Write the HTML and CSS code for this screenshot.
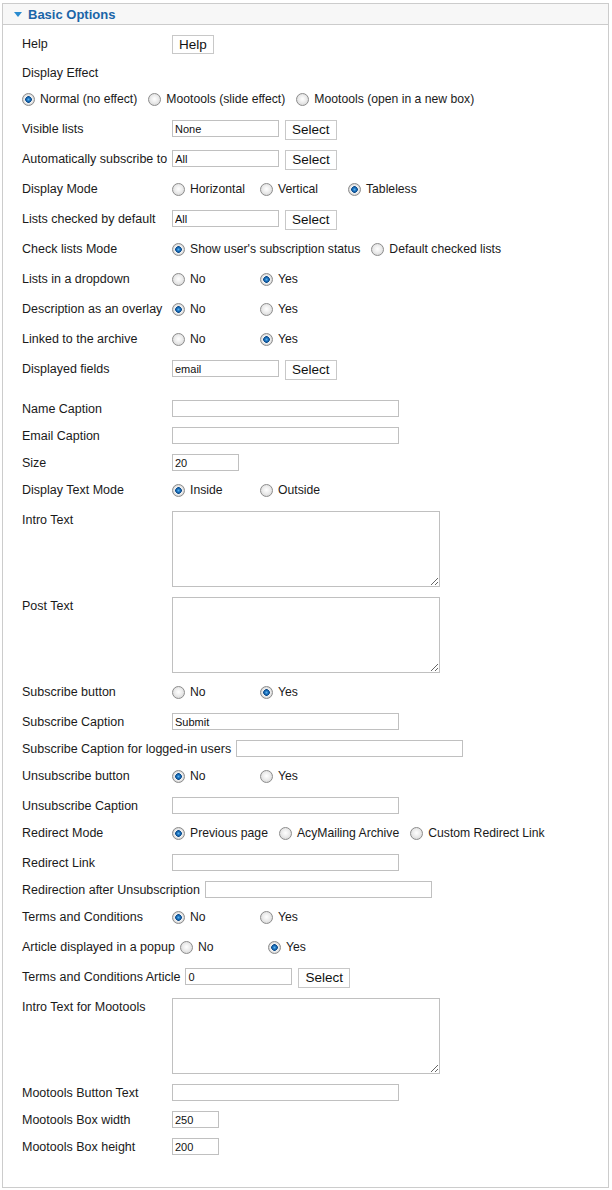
FILE: index.html
```html
<!DOCTYPE html>
<html lang="en">
<head>
<meta charset="utf-8">
<title>Basic Options</title>
<link rel="stylesheet" href="styles.css">
</head>
<body>
<div class="panel">
  <div class="panel-head">
    <span class="tri"></span>
    <span class="title">Basic Options</span>
  </div>
  <div class="panel-body">
    <div class="row"><span class="lbl">Help</span><button class="btn btn-help">Help</button></div>

    <div class="row row-lab"><span class="lbl">Display Effect</span></div>
    <div class="row">
      <div class="opts">
        <label class="opt"><input type="radio" class="rad" name="eff" checked>Normal (no effect)</label>
        <label class="opt"><input type="radio" class="rad" name="eff">Mootools (slide effect)</label>
        <label class="opt"><input type="radio" class="rad" name="eff">Mootools (open in a new box)</label>
      </div>
    </div>

    <div class="row"><span class="lbl">Visible lists</span><input class="txt w107" value="None"><button class="btn">Select</button></div>
    <div class="row"><span class="lbl">Automatically subscribe to</span><input class="txt w107" value="All"><button class="btn">Select</button></div>
    <div class="row"><span class="lbl">Display Mode</span>
      <div class="opts">
        <label class="opt"><input type="radio" class="rad" name="dm">Horizontal</label>
        <label class="opt"><input type="radio" class="rad" name="dm">Vertical</label>
        <label class="opt"><input type="radio" class="rad" name="dm" checked>Tableless</label>
      </div>
    </div>
    <div class="row"><span class="lbl">Lists checked by default</span><input class="txt w107" value="All"><button class="btn">Select</button></div>
    <div class="row"><span class="lbl">Check lists Mode</span>
      <div class="opts">
        <label class="opt"><input type="radio" class="rad" name="clm" checked>Show user's subscription status</label>
        <label class="opt"><input type="radio" class="rad" name="clm">Default checked lists</label>
      </div>
    </div>
    <div class="row"><span class="lbl">Lists in a dropdown</span>
      <div class="opts">
        <label class="opt"><input type="radio" class="rad" name="dd">No</label>
        <label class="opt"><input type="radio" class="rad" name="dd" checked>Yes</label>
      </div>
    </div>
    <div class="row"><span class="lbl">Description as an overlay</span>
      <div class="opts">
        <label class="opt"><input type="radio" class="rad" name="ov" checked>No</label>
        <label class="opt"><input type="radio" class="rad" name="ov">Yes</label>
      </div>
    </div>
    <div class="row"><span class="lbl">Linked to the archive</span>
      <div class="opts">
        <label class="opt"><input type="radio" class="rad" name="ar">No</label>
        <label class="opt"><input type="radio" class="rad" name="ar" checked>Yes</label>
      </div>
    </div>
    <div class="row"><span class="lbl">Displayed fields</span><input class="txt w107" value="email"><button class="btn">Select</button></div>

    <div class="spacer"></div>

    <div class="row"><span class="lbl">Name Caption</span><input class="txt w227" value=""></div>
    <div class="row"><span class="lbl">Email Caption</span><input class="txt w227" value=""></div>
    <div class="row"><span class="lbl">Size</span><input class="txt w67" value="20"></div>
    <div class="row"><span class="lbl">Display Text Mode</span>
      <div class="opts">
        <label class="opt"><input type="radio" class="rad" name="tm" checked>Inside</label>
        <label class="opt"><input type="radio" class="rad" name="tm">Outside</label>
      </div>
    </div>
    <div class="row"><span class="lbl">Intro Text</span><textarea class="area"></textarea></div>
    <div class="row"><span class="lbl">Post Text</span><textarea class="area"></textarea></div>
    <div class="row"><span class="lbl">Subscribe button</span>
      <div class="opts">
        <label class="opt"><input type="radio" class="rad" name="sb">No</label>
        <label class="opt"><input type="radio" class="rad" name="sb" checked>Yes</label>
      </div>
    </div>
    <div class="row"><span class="lbl">Subscribe Caption</span><input class="txt w227" value="Submit"></div>
    <div class="row"><span class="lbl">Subscribe Caption for logged-in users</span><input class="txt w227" value=""></div>
    <div class="row"><span class="lbl">Unsubscribe button</span>
      <div class="opts">
        <label class="opt"><input type="radio" class="rad" name="ub" checked>No</label>
        <label class="opt"><input type="radio" class="rad" name="ub">Yes</label>
      </div>
    </div>
    <div class="row"><span class="lbl">Unsubscribe Caption</span><input class="txt w227" value=""></div>
    <div class="row"><span class="lbl">Redirect Mode</span>
      <div class="opts">
        <label class="opt"><input type="radio" class="rad" name="rm" checked>Previous page</label>
        <label class="opt"><input type="radio" class="rad" name="rm">AcyMailing Archive</label>
        <label class="opt"><input type="radio" class="rad" name="rm">Custom Redirect Link</label>
      </div>
    </div>
    <div class="row"><span class="lbl">Redirect Link</span><input class="txt w227" value=""></div>
    <div class="row"><span class="lbl">Redirection after Unsubscription</span><input class="txt w227" value=""></div>
    <div class="row"><span class="lbl">Terms and Conditions</span>
      <div class="opts">
        <label class="opt"><input type="radio" class="rad" name="tc" checked>No</label>
        <label class="opt"><input type="radio" class="rad" name="tc">Yes</label>
      </div>
    </div>
    <div class="row"><span class="lbl">Article displayed in a popup</span>
      <div class="opts">
        <label class="opt"><input type="radio" class="rad" name="ap">No</label>
        <label class="opt"><input type="radio" class="rad" name="ap" checked>Yes</label>
      </div>
    </div>
    <div class="row"><span class="lbl">Terms and Conditions Article</span><input class="txt w107" value="0"><button class="btn">Select</button></div>
    <div class="row"><span class="lbl">Intro Text for Mootools</span><textarea class="area"></textarea></div>
    <div class="row"><span class="lbl">Mootools Button Text</span><input class="txt w227" value=""></div>
    <div class="row"><span class="lbl">Mootools Box width</span><input class="txt w47" value="250"></div>
    <div class="row"><span class="lbl">Mootools Box height</span><input class="txt w47" value="200"></div>
  </div>
</div>
</body>
</html>
```

FILE: styles.css
```css
html, body {
  margin: 0;
  padding: 0;
  background: #ffffff;
}

body {
  font-family: "Liberation Sans", Arial, sans-serif;
  font-size: 12px;
  color: #1a1a1a;
}

.panel {
  margin: 3px 0 0 2px;
  width: 605px;
  border: 1px solid #cccccc;
  background: #ffffff;
}

.panel-head {
  height: 20px;
  background: #f7f7f7;
  border-bottom: 1px solid #cccccc;
  display: flex;
  align-items: center;
  padding-left: 11px;
}

.tri {
  width: 0;
  height: 0;
  border-left: 4px solid transparent;
  border-right: 4px solid transparent;
  border-top: 5px solid #2a8bd0;
  margin-right: 6px;
  margin-top: 1px;
}

.title {
  font-size: 13px;
  font-weight: bold;
  color: #1a65a8;
}

.panel-body {
  padding: 5px 0 27px 19px;
}

.row {
  display: flex;
  align-items: flex-start;
  padding: 5px 0;
}

.row-lab {
  padding-bottom: 4px;
}

.spacer {
  height: 10px;
}

.lbl {
  min-width: 145px;
  margin-right: 5px;
  padding-top: 1px;
  line-height: 16px;
  white-space: nowrap;
  font-size: 12.5px;
}

.txt {
  box-sizing: border-box;
  height: 17px;
  margin: 0;
  padding: 0 2px;
  border: 1px solid #c0c0c0;
  font-family: "Liberation Sans", Arial, sans-serif;
  font-size: 11px;
  color: #111;
  background: #fff;
  outline: none;
}

.w47 { width: 47px; }
.w67 { width: 67px; }
.w107 { width: 107px; }
.w227 { width: 227px; }

.btn {
  box-sizing: border-box;
  height: 20px;
  margin: 0 0 0 6px;
  padding: 0 6px;
  border: 1px solid #c8c8c8;
  background: #ffffff;
  font-family: "Liberation Sans", Arial, sans-serif;
  font-size: 13.5px;
  line-height: 18px;
  color: #111;
}

.btn-help {
  margin-left: 0;
  height: 19px;
  line-height: 17px;
}

.area {
  box-sizing: border-box;
  width: 268px;
  height: 76px;
  margin: 0;
  border: 1px solid #c0c0c0;
  background: #fff;
  font-family: "Liberation Sans", Arial, sans-serif;
  font-size: 11px;
}

.opts {
  display: flex;
  height: 20px;
  padding-top: 1px;
  box-sizing: border-box;
  align-items: flex-start;
}

.opt {
  display: flex;
  align-items: center;
  height: 16px;
  min-width: 77px;
  margin-right: 11px;
  white-space: nowrap;
  font-size: 12.2px;
}

.rad {
  appearance: none;
  -webkit-appearance: none;
  box-sizing: border-box;
  width: 13px;
  height: 13px;
  margin: 0 5px 0 0;
  border-radius: 50%;
  border: 1px solid #8c8c8c;
  background: radial-gradient(circle at 50% 45%, #ffffff 0, #ececec 45%, #cdcdcd 100%);
  flex: none;
}

.rad:checked {
  background: radial-gradient(circle at 50% 50%, #5fb4ee 0, #1d74c0 1.6px, #0b4a8a 3px, #f2f2f2 3.6px, #e6e6e6 4.5px, #cdcdcd 6px);
}
```
